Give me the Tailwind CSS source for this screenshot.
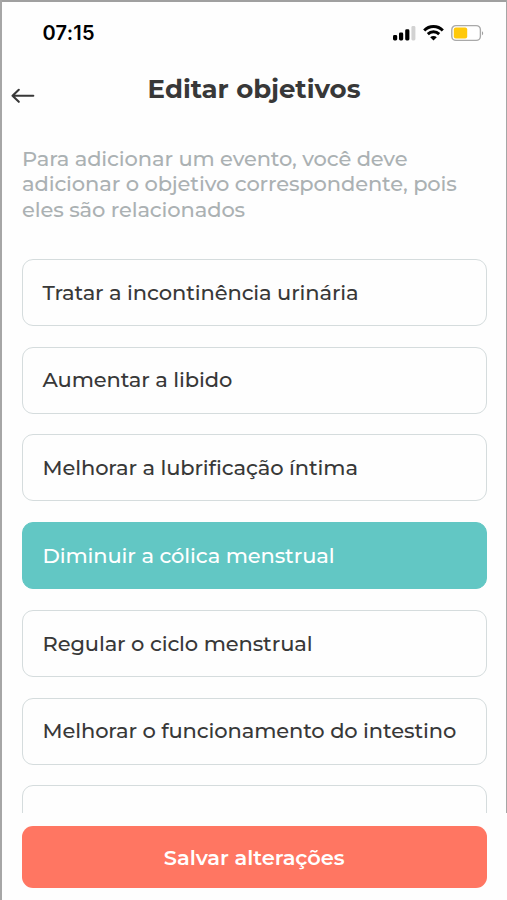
<!DOCTYPE html>
<html lang="pt-BR">
<head>
<meta charset="utf-8">
<title>Editar objetivos</title>
<script src="https://cdn.jsdelivr.net/npm/@tailwindcss/browser@4"></script>
</head>
<body class="bg-white font-['Montserrat','Inter',sans-serif]">
<main class="relative flex h-[900px] w-[507px] flex-col overflow-hidden bg-[#fefefe] text-[#383838]">
  <div class="pointer-events-none absolute inset-x-0 top-0 h-[2px] bg-[#a0a0a0]"></div>
  <div class="pointer-events-none absolute inset-y-0 left-0 w-[2px] bg-[#a6a6a6]"></div>
  <div class="pointer-events-none absolute right-0 top-0 h-[813px] w-px bg-[#a6a6a6]"></div>

  <header class="flex h-[66px] shrink-0 items-center justify-between pl-[42.5px] pr-[23px] text-black">
    <time class="font-['Inter',sans-serif] text-[20px] font-semibold leading-6 tracking-[0.25px]">07:15</time>
    <div class="flex items-center">
      <svg class="h-[18px] w-[24px]" viewBox="0 0 24 18"><rect x="0" y="11" width="4.2" height="5.5" rx="1.4"/><rect x="6" y="8.5" width="4.2" height="8" rx="1.4"/><rect x="12.2" y="5.3" width="4.2" height="11.2" rx="1.4"/><rect x="18.4" y="2" width="4" height="14.5" rx="1.4" fill="#d2d2d2"/></svg>
      <svg class="ml-[6px] h-[18px] w-[21px]" viewBox="0 0 21 18" fill="none" stroke="#000" stroke-width="2.9"><path d="M1.2 6.5C6.2 1.2 14.8 1.2 19.8 6.5"/><path d="M4.8 10.1c3.2-3.1 8.2-3.1 11.4 0"/><path d="M7.2 13.2c1.9-1.7 4.7-1.7 6.6 0L10.5 16.4z" fill="#000" stroke="none"/></svg>
      <svg class="ml-[7px] h-[18px] w-[33px]" viewBox="0 0 33 18"><rect x=".8" y="1.6" width="28.6" height="14.8" rx="4.2" fill="#fff" stroke="#a9a9a9" stroke-width="1.4"/><rect x="2.8" y="3.6" width="13.4" height="10.8" rx="2" fill="#ffc90a"/><path d="M31 7.2c1.6.8 1.6 3.2 0 4z" fill="#a0a0a0"/></svg>
    </div>
  </header>

  <div class="grid h-[46px] shrink-0 grid-cols-[60px_1fr_60px] px-[11px]">
    <svg class="mt-[22px] h-[17px] w-[24px]" viewBox="0 0 24 17" fill="none" stroke="#383838" stroke-width="2.1" stroke-linecap="round" stroke-linejoin="round"><path d="M22.3 7.8H1.5M7.8 1.8 1.5 7.8 7.8 13.8"/></svg>
    <h1 class="mt-[6px] pl-px text-center text-[26px] font-bold leading-[34px]">Editar objetivos</h1>
  </div>

  <p class="mt-[34px] flex shrink-0 flex-col pl-[22px] text-[21px] font-medium leading-[25.3px] tracking-[-0.12px] text-[#abb1b3]">
    <span class="w-max">Para adicionar um evento, você deve</span>
    <span class="w-max">adicionar o objetivo correspondente, pois</span>
    <span class="w-max">eles são relacionados</span>
  </p>

  <ul class="mt-[37px] flex min-h-0 flex-1 flex-col gap-[20.75px] overflow-hidden pl-[21.5px] pr-[20.5px] text-[21px] font-medium tracking-[-0.11px] [&>li]:flex [&>li]:h-[67px] [&>li]:shrink-0 [&>li]:items-center [&>li]:rounded-[11px] [&>li]:border-[1.5px] [&>li]:pl-[20px]">
    <li class="border-[#d5dcdd]">Tratar a incontinência urinária</li>
    <li class="border-[#d5dcdd]">Aumentar a libido</li>
    <li class="border-[#d5dcdd]">Melhorar a lubrificação íntima</li>
    <li class="border-[#62c7c4] bg-[#62c7c4] text-white">Diminuir a cólica menstrual</li>
    <li class="border-[#d5dcdd]">Regular o ciclo menstrual</li>
    <li class="border-[#d5dcdd]">Melhorar o funcionamento do intestino</li>
    <li class="border-[#d5dcdd]"></li>
  </ul>

  <footer class="h-[87px] shrink-0 pl-[22px] pr-[20.5px] pt-[13px]">
    <button class="flex h-[62px] w-full items-center justify-center rounded-[11px] bg-[#ff7662] pt-px text-[21px] font-semibold tracking-[-0.05px] text-white">Salvar alterações</button>
  </footer>
</main>
</body>
</html>
